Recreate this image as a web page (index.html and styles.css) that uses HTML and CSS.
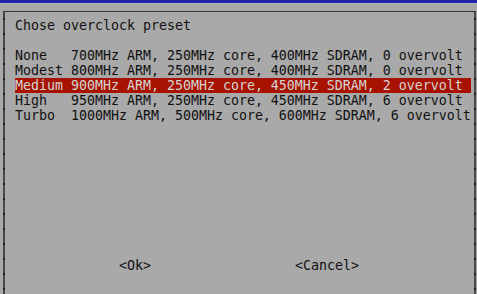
FILE: index.html
```html
<!DOCTYPE html>
<html lang="en">
<head>
    <meta charset="UTF-8">
    <title>Chose overclock preset</title>
    <link rel="stylesheet" href="styles.css">
</head>
<body>
    <div class="topbar"></div>
    <div class="dialog">
        <div class="title">Chose overclock preset</div>
        <div class="menu">
            <div class="item"><span class="tag">None</span>700MHz ARM, 250MHz core, 400MHz SDRAM, 0 overvolt</div>
            <div class="item"><span class="tag">Modest</span>800MHz ARM, 250MHz core, 400MHz SDRAM, 0 overvolt</div>
            <div class="item selected"><span class="tag">Medium</span>900MHz ARM, 250MHz core, 450MHz SDRAM, 2 overvolt</div>
            <div class="item"><span class="tag">High</span>950MHz ARM, 250MHz core, 450MHz SDRAM, 6 overvolt</div>
            <div class="item"><span class="tag">Turbo</span>1000MHz ARM, 500MHz core, 600MHz SDRAM, 6 overvolt</div>
        </div>
        <div class="buttons">
            <span class="btn">&lt;Ok&gt;</span>
            <span class="btn">&lt;Cancel&gt;</span>
        </div>
    </div>
</body>
</html>
```

FILE: styles.css
```css
body {
    margin: 0;
    background: #a9a9a9;
    color: #111;
    font-family: 'DejaVu Sans Mono', 'Liberation Mono', monospace;
    font-size: 13.29px;
    line-height: 15px;
    overflow: hidden;
    height: 294px;
}
.topbar {
    height: 3px;
    background: #2222aa;
    border-bottom: 1px solid #b4b4bc;
}
.dialog {
    box-sizing: border-box;
    margin: 7px 1px 0 3px;
    height: 283px;
    border-top: 1px solid #363636;
    padding: 6px 0 0 12px;
    background-image:
        repeating-linear-gradient(to bottom, #4a4a4a 0 6px, #1e1e1e 6px 8px, #4a4a4a 8px 15px),
        repeating-linear-gradient(to bottom, #4a4a4a 0 6px, #1e1e1e 6px 8px, #4a4a4a 8px 15px);
    background-size: 2px 100%, 2px 100%;
    background-position: left top, right top;
    background-repeat: no-repeat;
}
.title {
    margin-bottom: 15px;
}
.menu {
    width: 456px;
}
.item {
    height: 15px;
    white-space: pre;
}
.tag {
    display: inline-block;
    width: 7ch;
}
.selected {
    background: #a81200;
    color: #d4d4d4;
}
.buttons {
    display: flex;
    gap: 144px;
    margin-top: 135px;
    padding-left: 104px;
}
```
